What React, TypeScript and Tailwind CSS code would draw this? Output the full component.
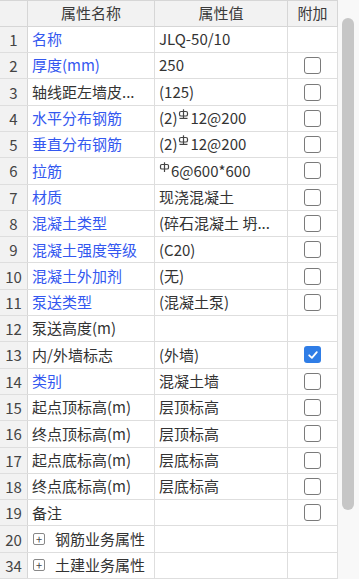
import React from "react";

type Row = {
  n: string;
  name: string;
  blue?: boolean;
  value?: React.ReactNode;
  check?: "off" | "on";
  plus?: boolean;
};

const Rebar3 = () => (
  <svg width="11" height="12" viewBox="0 0 11 12" className="inline-block align-top mt-[2px] mx-[1px]">
    <rect x="1.5" y="2.5" width="8" height="4.5" rx="1.6" fill="none" stroke="#444" strokeWidth="1.2" />
    <line x1="5.5" y1="0.3" x2="5.5" y2="10" stroke="#444" strokeWidth="1.2" />
    <line x1="1.5" y1="9.4" x2="9.5" y2="9.4" stroke="#444" strokeWidth="1.2" />
  </svg>
);

const Rebar1 = () => (
  <svg width="11" height="12" viewBox="0 0 11 12" className="inline-block align-top mt-[2px] mr-[1px]">
    <rect x="1.5" y="2.5" width="8" height="4.5" rx="1.3" fill="none" stroke="#444" strokeWidth="1.2" />
    <line x1="5.5" y1="0.3" x2="5.5" y2="10" stroke="#444" strokeWidth="1.2" />
  </svg>
);

const rows: Row[] = [
  { n: "1", name: "名称", blue: true, value: "JLQ-50/10" },
  { n: "2", name: "厚度(mm)", blue: true, value: "250", check: "off" },
  { n: "3", name: "轴线距左墙皮...", value: "(125)", check: "off" },
  { n: "4", name: "水平分布钢筋", blue: true, value: (<>(2)<Rebar3 />12@200</>), check: "off" },
  { n: "5", name: "垂直分布钢筋", blue: true, value: (<>(2)<Rebar3 />12@200</>), check: "off" },
  { n: "6", name: "拉筋", blue: true, value: (<><Rebar1 />6@600*600</>), check: "off" },
  { n: "7", name: "材质", blue: true, value: "现浇混凝土", check: "off" },
  { n: "8", name: "混凝土类型", blue: true, value: "(碎石混凝土 坍...", check: "off" },
  { n: "9", name: "混凝土强度等级", blue: true, value: "(C20)", check: "off" },
  { n: "10", name: "混凝土外加剂", blue: true, value: "(无)", check: "off" },
  { n: "11", name: "泵送类型", blue: true, value: "(混凝土泵)", check: "off" },
  { n: "12", name: "泵送高度(m)", value: "" },
  { n: "13", name: "内/外墙标志", value: "(外墙)", check: "on" },
  { n: "14", name: "类别", blue: true, value: "混凝土墙", check: "off" },
  { n: "15", name: "起点顶标高(m)", value: "层顶标高", check: "off" },
  { n: "16", name: "终点顶标高(m)", value: "层顶标高", check: "off" },
  { n: "17", name: "起点底标高(m)", value: "层底标高", check: "off" },
  { n: "18", name: "终点底标高(m)", value: "层底标高", check: "off" },
  { n: "19", name: "备注", value: "", check: "off" },
  { n: "20", name: "钢筋业务属性", plus: true },
  { n: "34", name: "土建业务属性", plus: true },
];

const font = { fontFamily: '"Noto Sans CJK SC", "Noto Sans", sans-serif' };

const CheckBox = ({ on }: { on: boolean }) =>
  on ? (
    <div className="w-[17px] h-[17px] rounded-[3px] bg-[#2f7de6] flex items-center justify-center">
      <svg width="12" height="12" viewBox="0 0 12 12">
        <path d="M2.2 6.3 L4.9 8.8 L9.8 3.2" fill="none" stroke="#fff" strokeWidth="1.8" strokeLinecap="round" strokeLinejoin="round" />
      </svg>
    </div>
  ) : (
    <div className="w-[17px] h-[17px] rounded-[3px] border border-[#7a7a7a] bg-white" />
  );

export default function App() {
  return (
    <div className="w-[359px] h-[579px] flex bg-white overflow-hidden text-[15px] text-[#333]" style={font}>
      <div className="w-[338px] flex flex-col">
        <div className="flex h-[28px] border-t border-b border-[#d6d6d6] bg-[#f2f2f2] text-[#3a3a3a]">
          <div className="w-[28px] border-r border-[#d6d6d6]" />
          <div className="w-[127px] border-r border-[#d6d6d6] flex items-center justify-center">属性名称</div>
          <div className="w-[133px] border-r border-[#d6d6d6] flex items-center justify-center">属性值</div>
          <div className="w-[50px] border-r border-[#d6d6d6] flex items-center justify-center">附加</div>
        </div>
        {rows.map((r) => (
          <div key={r.n} className="flex h-[26.3px] shrink-0 border-b border-[#dedede]">
            <div className="w-[28px] bg-[#f2f2f2] border-r border-[#d6d6d6] flex items-center justify-center text-[#444] leading-none">
              {r.n}
            </div>
            <div
              className={`w-[127px] border-r border-[#dedede] flex items-center pl-[4px] whitespace-nowrap overflow-hidden ${r.blue ? "text-[#3458f0]" : "text-[#333]"}`}
            >
              {r.plus && (
                <span className="w-[12px] h-[12px] ml-[1px] mr-[10px] border border-[#888] rounded-[2px] flex items-center justify-center text-[11px] leading-none text-[#444]">
                  +
                </span>
              )}
              {r.name}
            </div>
            <div className="w-[133px] border-r border-[#dedede] flex items-center pl-[4px] whitespace-nowrap overflow-hidden text-[#333]">
              <span>{r.value}</span>
            </div>
            <div className="w-[50px] border-r border-[#dedede] flex items-center justify-center">
              {r.check && <CheckBox on={r.check === "on"} />}
            </div>
          </div>
        ))}
      </div>
      <div className="w-[21px] bg-[#f8f8f8] flex flex-col pt-[18px] pl-[4px]">
        <div className="w-[12px] h-[492px] rounded-full bg-[#c6c6c6]" />
      </div>
    </div>
  );
}
